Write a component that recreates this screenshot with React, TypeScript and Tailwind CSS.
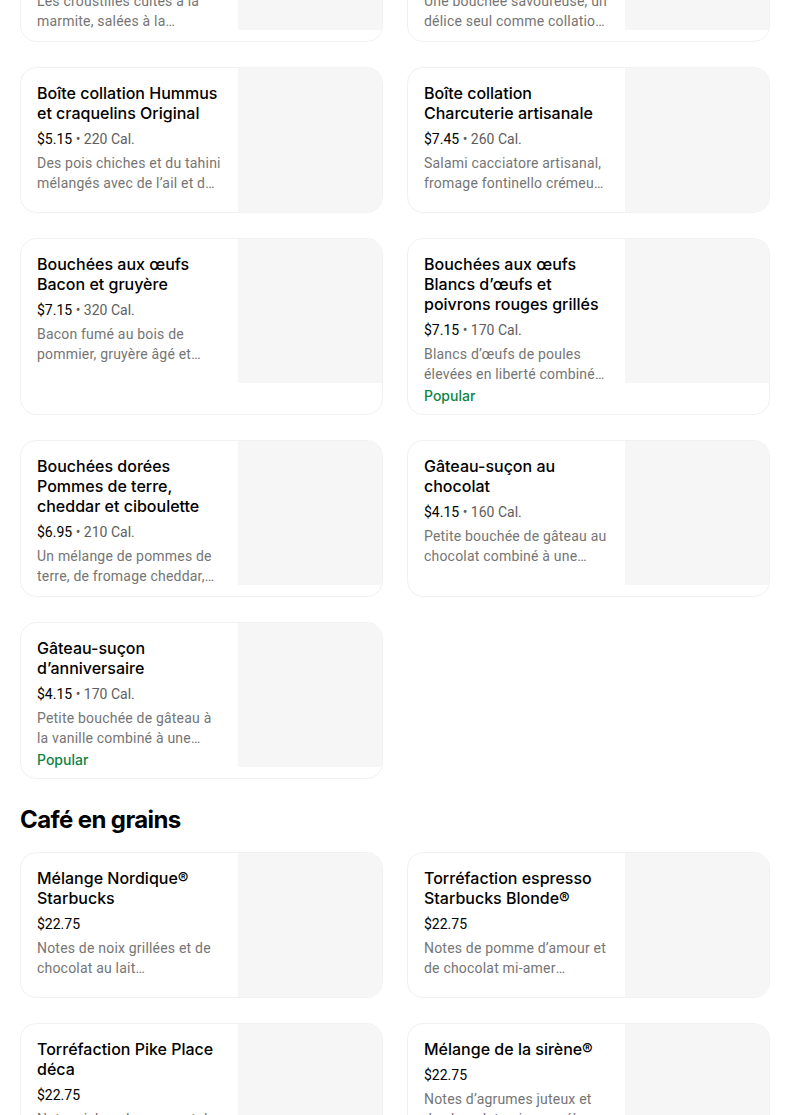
import React from 'react';

type Item = {
  title: string;
  price: string;
  cal?: string;
  desc: string;
  popular?: boolean;
};

const snacks: Item[] = [
  {
    title: 'Croustilles cuites à la\nmarmite Kettle Brand\nSel de mer',
    price: '$3.45',
    cal: '210 Cal.',
    desc: 'Les croustilles cuites à la marmite, salées à la perfection avec du sel de mer.',
  },
  {
    title: 'Barre protéinée\nBeurre d’arachide et\nchocolat noir',
    price: '$3.95',
    cal: '250 Cal.',
    desc: 'Une bouchée savoureuse, un délice seul comme collation en après-midi.',
  },
  {
    title: 'Boîte collation Hummus\net craquelins Original',
    price: '$5.15',
    cal: '220 Cal.',
    desc: 'Des pois chiches et du tahini mélangés avec de l’ail et du jus de citron, servis avec des craquelins.',
  },
  {
    title: 'Boîte collation\nCharcuterie artisanale',
    price: '$7.45',
    cal: '260 Cal.',
    desc: 'Salami cacciatore artisanal, fromage fontinello crémeux et craquelins multigrains.',
  },
  {
    title: 'Bouchées aux œufs\nBacon et gruyère',
    price: '$7.15',
    cal: '320 Cal.',
    desc: 'Bacon fumé au bois de pommier, gruyère âgé et fromage Monterey Jack cuits sous vide.',
  },
  {
    title: 'Bouchées aux œufs\nBlancs d’œufs et\npoivrons rouges grillés',
    price: '$7.15',
    cal: '170 Cal.',
    desc: 'Blancs d’œufs de poules élevées en liberté combinés à des poivrons rouges rôtis et des épinards.',
    popular: true,
  },
  {
    title: 'Bouchées dorées\nPommes de terre,\ncheddar et ciboulette',
    price: '$6.95',
    cal: '210 Cal.',
    desc: 'Un mélange de pommes de terre, de fromage cheddar, de ciboulette et d’œufs.',
  },
  {
    title: 'Gâteau-suçon au\nchocolat',
    price: '$4.15',
    cal: '160 Cal.',
    desc: 'Petite bouchée de gâteau au chocolat combiné à une garniture au chocolat.',
  },
  {
    title: 'Gâteau-suçon\nd’anniversaire',
    price: '$4.15',
    cal: '170 Cal.',
    desc: 'Petite bouchée de gâteau à la vanille combiné à une garniture au glaçage rose.',
    popular: true,
  },
];

const beans: Item[] = [
  {
    title: 'Mélange Nordique®\nStarbucks',
    price: '$22.75',
    desc: 'Notes de noix grillées et de chocolat au lait caramélisées, un café bien équilibré.',
  },
  {
    title: 'Torréfaction espresso\nStarbucks Blonde®',
    price: '$22.75',
    desc: 'Notes de pomme d’amour et de chocolat mi-amer accompagnées d’une douceur.',
  },
  {
    title: 'Torréfaction Pike Place\ndéca',
    price: '$22.75',
    desc: 'Notes riches de cacao et de noix grillées, un café déca tout en douceur.',
  },
  {
    title: 'Mélange de la sirène®',
    price: '$22.75',
    desc: 'Notes d’agrumes juteux et de chocolat noir, un mélange gorgé de soleil.',
  },
];

const body = { fontFamily: 'Roboto, "Liberation Sans", sans-serif' };

const MenuCard = ({ item }: { item: Item }) => (
  <div className="flex border border-[#f1f1f1] rounded-2xl overflow-hidden bg-white">
    <div className="flex-1 min-w-0 px-4 pt-[15px] pb-[10px] flex flex-col">
      <div className="text-[16px] leading-5 font-medium text-black whitespace-pre-line">{item.title}</div>
      <div className="mt-[6px] text-[14px] leading-5 text-[#5e5e5e]" style={body}>
        <span className="text-black">{item.price}</span>
        {item.cal && <span> • {item.cal}</span>}
      </div>
      <div className="mt-1 text-[14px] leading-5 tracking-[0.2px] text-[#757575] line-clamp-2" style={body}>
        {item.desc}
      </div>
      {item.popular && (
        <div className="mt-[2px] -mb-[2px] text-[14px] leading-5 font-medium text-[#0e8345]">Popular</div>
      )}
    </div>
    <div className="w-[144px] h-[144px] shrink-0 bg-[#f6f6f6]" />
  </div>
);

export default function App() {
  return (
    <div
      className="w-[750px] ml-5 -mt-[115px] bg-white"
      style={{ fontFamily: 'Inter, "Noto Sans", sans-serif' }}
    >
      <div className="grid grid-cols-2 gap-x-6 gap-y-[25px]">
        {snacks.map((item) => (
          <MenuCard key={item.title} item={item} />
        ))}
      </div>

      <h2 className="mt-[25px] mb-4 text-[24px] leading-8 font-bold tracking-tight text-black">Café en grains</h2>

      <div className="grid grid-cols-2 gap-x-6 gap-y-[25px] pb-10">
        {beans.map((item) => (
          <MenuCard key={item.title} item={item} />
        ))}
      </div>
    </div>
  );
}
